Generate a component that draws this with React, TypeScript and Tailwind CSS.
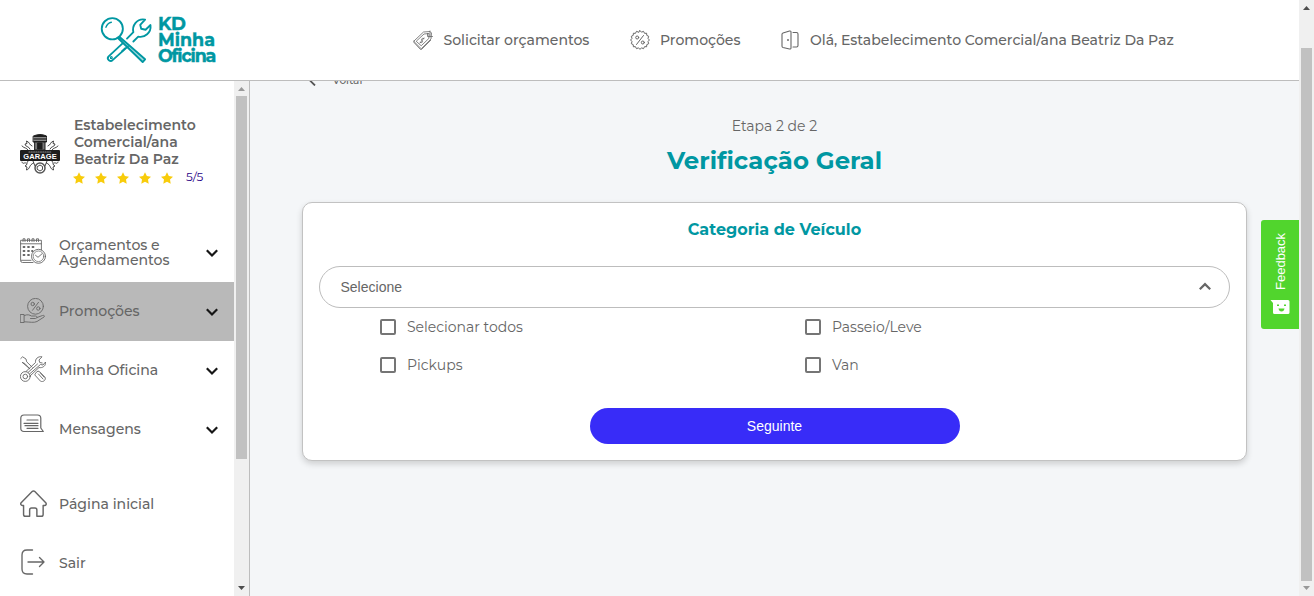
import React from "react";

const line = { fill: "none", stroke: "currentColor", strokeLinecap: "round", strokeLinejoin: "round" } as const;

function Logo() {
  return (
    <div className="ml-[100px] flex w-[116px] items-center gap-[5px] text-[#0097a2]">
      <svg className="mt-px h-[47px] w-[53px] shrink-0" viewBox="0 0 53 48" {...line} strokeWidth="1.9">
        <circle cx="12" cy="12" r="10.8" />
        <path d="M5.500 10.500C6.500 7.500 8.500 6 11 5.400" strokeWidth="1.4" />
        <path d="M19.500 20.500L45.500 43.200L43 46L18.500 22.200Z" fill="#0097a2" fillOpacity=".35" />
        <path d="M27 22l6.500-6.500C32 9 37 1 45.500 2.600L40.500 8l1 4 4.500 1L51 8.200C52 16 45 21.500 38.500 20L33.500 25" />
        <path d="M22.500 27L8 40.500c-2 2.500 2 6 4.300 3.500L28 30" />
        <circle cx="11" cy="41.500" r=".6" />
        <path d="M22 35L25 32" />
      </svg>
      <div className="text-[17.5px] leading-4 font-bold whitespace-nowrap [-webkit-text-stroke:0.4px_#0097a2]">
        <div className="text-[18px] tracking-[-0.2px]">KD</div>
        <div className="tracking-[0px]">Minha</div>
        <div className="tracking-[-1.15px]">Oficina</div>
      </div>
    </div>
  );
}

function TagsIcon() {
  return (
    <svg className="h-5 w-5" viewBox="0 0 20 20" {...line} strokeWidth=".8">
      <path d="M1 11L10.500 2 17 1.500 18.500 3 18 9 8.500 18.500Z" />
      <path d="M3.500 11L11 4l5-.5L15.800 8.500 8.500 15.500Z" />
      <path d="M1 11v1.500l6.500 7 1.200-.2 9-9" />
      <path d="M11 8.500c-2-1-3.200 1-2 2s.500 3-1.800 1.800M7 13l4-5M14.500 3.500v3h5M17 1v6" />
    </svg>
  );
}

function PercentBadgeIcon() {
  return (
    <svg className="h-5 w-5" viewBox="0 0 20 20" {...line} strokeWidth="1">
      <path d="M10 .6L11.500 2.200 13.500 1.300 14.600 3.400 16.600 3.200 16.800 5.400 18.700 6.300 18 8.400 19.400 10 18 11.600 18.700 13.700 16.800 14.600 16.600 16.800 14.600 16.600 13.500 18.700 11.500 17.800 10 19.400 8.500 17.800 6.500 18.700 5.400 16.600 3.400 16.800 3.200 14.600 1.300 13.700 2 11.600.6 10 2 8.400 1.300 6.300 3.200 5.400 3.400 3.200 5.400 3.400 6.500 1.300 8.500 2.200z" />
      <circle cx="7.200" cy="7.500" r="1.500" />
      <circle cx="12.800" cy="12.500" r="1.500" />
      <path d="M13.500 5.500l-7 9" />
    </svg>
  );
}

function DoorIcon() {
  return (
    <svg className="ml-px h-5 w-5" viewBox="0 0 20 20" {...line} strokeWidth="1.100">
      <path d="M2 3L8.500 1c1-.2 1.500.2 1.500 1v16c0 .8-.5 1.200-1.500 1L2 17.500c-.6-.2-1-.5-1-1.200v-12C1 3.600 1.300 3.200 2 3z" />
      <path d="M12 2.500h3.500q1.500 0 1.500 1.500v11.500q0 1.500-1.500 1.500H12" />
      <circle cx="7" cy="10" r=".4" />
    </svg>
  );
}

function GarageLogo() {
  return (
    <div className="relative h-10 w-10 shrink-0 text-[#1e1e1e]">
      <svg className="h-10 w-10" viewBox="0 0 40 40" {...line} strokeWidth="1">
        <path d="M13.500 2q6.500-3 13 0v6h-13z" fill="#1e1e1e" />
        <path d="M14 3.800h12M14 6.200h12" stroke="#fff" strokeWidth=".7" />
        <path d="M15 8h10v8H15z" fill="#777" />
        <path d="M18 9h4v6h-4z" fill="#1e1e1e" />
        <path d="M10 15C9 12 5 13 5 10l2-.5-.5-2.500C10 8 9 11 12 12M2 12c3 3 4 1 6 4M30 15c1-3 5-2 5-5l-2-.5.5-2.500C30 8 31 11 28 12M38 12c-3 3-4 1-6 4" strokeWidth=".8" />
        <path d="M8 27c-2 2 0 4-3 5l2 1-.5 3c4-1 2-5 7-7M32 27c2 2 0 4 3 5l-2 1 .5 3c-4-1-2-5-7-7M2 28c1 3 2 0 4 1M38 28c-1 3-2 0-4 1M13 27l2 5M27 27l-2 5" strokeWidth=".8" />
        <circle cx="20" cy="34" r="5" strokeWidth="1.500" stroke="#555" />
        <path d="M17.500 32.500l2.500-1.500 2.500 1.500v3L20 37l-2.500-1.500z" strokeWidth=".8" />
        <rect x="0" y="16" width="40" height="11" rx="1" fill="#1e1e1e" stroke="none" />
        <path d="M9 18h22" stroke="#888" strokeDasharray="1 1.300" strokeWidth="1.200" />
      </svg>
      <div className="absolute inset-x-0 top-[19px] text-center font-['Liberation_Sans'] text-[7.500px] leading-[7px] font-bold tracking-[.1px] whitespace-nowrap text-white">
        GARAGE
      </div>
    </div>
  );
}

function CalendarIcon() {
  return (
    <svg className="h-[26px] w-[26px]" viewBox="0 0 26 26" {...line} strokeWidth=".9">
      <path d="M13 24.500H2.500Q.6 24.500.6 22.500V2.300h20.800V12M.6 5.800h20.800M1 22.300h10" />
      <path d="M3 3.500V.8h2v2.700M7.500 3.500V.8h2v2.700M12 3.500V.8h2v2.700M16.500 3.500V.8h2v2.700" />
      <path d="M3.500 9h1M8 9h1M12.500 9h1M3.500 13h1M8 13h1M12 13h.5M3.500 17h1M8 17h1" strokeWidth="1.800" />
      <circle cx="18.500" cy="18.300" r="7" />
      <circle cx="18.500" cy="18.300" r="5.300" strokeWidth=".7" />
      <path d="M15.500 17.300l2.500 2 4-3.500" />
    </svg>
  );
}

function HandPercentIcon() {
  return (
    <svg className="mt-[2px] h-[26px] w-[26px]" viewBox="0 0 26 26" {...line} strokeWidth=".9">
      <circle cx="15.500" cy="8.300" r="7.900" />
      <circle cx="12.700" cy="6" r="1.700" />
      <circle cx="18.300" cy="10.500" r="1.700" />
      <path d="M18.500 4.300l-6 8" />
      <path d="M.6 16.500h3.500v8H.6zM4.500 17.500c3-1.500 5-.5 7 .5h4c2 .3 2 2 0 2.500h-5M17 19.500l5.500-2c1.500-.5 2.500.5 1.500 1.500l-7 4.500c-3 1.500-7 .5-12.500.3" />
    </svg>
  );
}

function ToolsIcon() {
  return (
    <svg className="h-[26px] w-[26px]" viewBox="0 0 26 26" {...line} strokeWidth=".9">
      <path d="M.8 2.500L2.600.8 6 3l.7 2.800 5.500 5.400M9.800 12.800L4.800 7.500 2.500 6.500z" />
      <path d="M15.500 17.500l1.500-2 2-.3 6 6c1.500 2.500-2 5.500-4.500 4l-5.500-6zM18.500 18l4.500 5M20.200 16.800l4 4.500" />
      <path d="M9.500 18L20.500 8.500l2.500.5 2.500-3c.5 4-3 6.300-6.500 5.500L10 20M6 15.500L15.500 6.500C15 3 18 0 22 .8L19 4l.7 2.500 2.500.5" />
      <circle cx="5.300" cy="20.500" r="4.900" />
      <circle cx="5.300" cy="20.500" r="2.300" />
      <path d="M8 16.500l9.500-8.500" />
    </svg>
  );
}

function MessageIcon() {
  return (
    <svg className="-mt-[8px] h-[26px] w-[26px]" viewBox="0 0 26 26" {...line} strokeWidth="1.200">
      <path d="M4 4h13.500q3.300 0 3.300 3.300V17l2.500 3.500H4Q.8 20.500.8 17.300V7.300Q.8 4 4 4z" />
      <path d="M7 9h11M4 12.300h14M5 14.700h13M7 17.300h11" />
    </svg>
  );
}

function HomeIcon() {
  return (
    <svg className="mt-[2px] h-[27px] w-[27px]" viewBox="0 0 28 28" {...line} strokeWidth="1.500">
      <path d="M14 1q-.8 0-1.400.6L1.200 13.300c-1 1.200-.2 2.700 1.200 2.700h1.300v9.300q0 1.900 1.900 1.900H10v-6.500q0-2 2-2h3.500q2 0 2 2v6.500h4.600q1.900 0 1.900-1.900V16h1.500c1.400 0 2.300-1.400 1.200-2.700L15.400 1.600Q14.800 1 14 1z" />
    </svg>
  );
}

function ExitIcon() {
  return (
    <svg className="h-[26px] w-[26px]" viewBox="0 0 26 26" {...line} strokeWidth="1.350">
      <path d="M12.500 1H7Q2 1 2 6v14q0 5 5 5h5.500M8 13h16M19.500 8.500L24 13l-4.500 4.500" />
    </svg>
  );
}

function Chevron({ up = false }: { up?: boolean }) {
  return (
    <svg className="h-3 w-3" viewBox="0 0 12 12" fill="none" stroke="currentColor" strokeWidth="2.200">
      <path d={up ? "M.8 8.300L6 3.100l5.200 5.200" : "M.8 3.300L6 8.500l5.200-5.200"} />
    </svg>
  );
}

function MenuItem({
  icon,
  children,
  active = false,
  arrow = true,
}: {
  icon: React.ReactNode;
  children: React.ReactNode;
  active?: boolean;
  arrow?: boolean;
}) {
  return (
    <div className={`flex h-[59px] items-center pr-4 pl-5 ${active ? "bg-[#b9b9b9]" : ""}`}>
      <div className="flex w-[39px] shrink-0 items-center pb-1">{icon}</div>
      <div className="flex-1 text-[14.050px] leading-[15px] font-medium whitespace-nowrap">{children}</div>
      {arrow && (
        <div className="text-[#161616]">
          <Chevron />
        </div>
      )}
    </div>
  );
}

function Check({ children }: { children: React.ReactNode }) {
  return (
    <div className="flex h-[38px] items-center gap-[11px]">
      <span className="h-4 w-4 rounded-[2px] border-2 border-[#757575]" />
      <span className="text-[14px]">{children}</span>
    </div>
  );
}

function Arrow({ up = false, muted = false }: { up?: boolean; muted?: boolean }) {
  return (
    <svg className="h-[15px] w-[15px] shrink-0" viewBox="0 0 15 15" fill={muted ? "#999" : "#4d4d4d"}>
      <path d={up ? "M7.500 6L11 10H4z" : "M7.500 9L11 5H4z"} />
    </svg>
  );
}

export default function App() {
  return (
    <div className="flex h-[596px] w-[1314px] overflow-hidden bg-[#f4f6f8] font-['Montserrat','Inter',sans-serif] text-[#666]">
      <div className="flex w-[1299px] flex-col">
        <header className="flex h-[81px] shrink-0 items-center border-b border-[#bdbdbd] bg-white">
          <Logo />
          <nav className="ml-[197px] flex items-center text-[14.030px] leading-5 font-medium whitespace-nowrap">
            <div className="flex w-[217px] items-center gap-[10.500px]">
              <TagsIcon />
              <span>Solicitar orçamentos</span>
            </div>
            <div className="flex w-[150px] items-center gap-[10px]">
              <PercentBadgeIcon />
              <span>Promoções</span>
            </div>
            <div className="flex items-center gap-[9px]">
              <DoorIcon />
              <span>Olá, Estabelecimento Comercial/ana Beatriz Da Paz</span>
            </div>
          </nav>
        </header>
        <div className="flex min-h-0 flex-1">
          <aside className="flex w-[250px] shrink-0 border-r border-[#bdbdbd] bg-white">
            <div className="w-[234px]">
              <div className="flex h-[142px] pt-9 pl-5">
                <div className="pt-[17px]">
                  <GarageLogo />
                </div>
                <div className="ml-[14px]">
                  <div className="text-[14.030px] leading-[17px] font-semibold whitespace-nowrap">
                    <div>Estabelecimento</div>
                    <div>Comercial/ana</div>
                    <div>Beatriz Da Paz</div>
                  </div>
                  <div className="-ml-px flex h-[18px] items-center text-[#f8cc0b]">
                    {[0, 1, 2, 3, 4].map((i) => (
                      <svg key={i} className="mt-px mr-[10px] h-3 w-3" viewBox="0 0 24 23" fill="currentColor">
                        <path d="M12 0l3.700 7.600 8.300 1.200-6 5.900 1.400 8.300-7.400-3.900L4.600 23 6 14.700 0 8.800l8.300-1.200z" />
                      </svg>
                    ))}
                    <span className="ml-[3px] pb-px text-[12px] leading-[14px] tracking-[-0.1px] text-[#260084]">5/5</span>
                  </div>
                </div>
              </div>
              <MenuItem icon={<CalendarIcon />}>
                Orçamentos e<br />
                Agendamentos
              </MenuItem>
              <MenuItem icon={<HandPercentIcon />} active>
                Promoções
              </MenuItem>
              <MenuItem icon={<ToolsIcon />}>Minha Oficina</MenuItem>
              <MenuItem icon={<MessageIcon />}>Mensagens</MenuItem>
              <div className="h-4" />
              <MenuItem icon={<HomeIcon />} arrow={false}>
                Página inicial
              </MenuItem>
              <MenuItem icon={<ExitIcon />} arrow={false}>
                Sair
              </MenuItem>
            </div>
            <div className="flex w-[15px] flex-col bg-[#f0f0f0]">
              <Arrow up muted />
              <div className="mx-auto h-[363px] w-[11px] bg-[#c1c1c1]" />
              <div className="flex-1" />
              <Arrow />
            </div>
          </aside>
          <main className="relative min-w-0 flex-1 overflow-hidden">
            <div className="-mt-[10px] flex h-[17px] items-center gap-[15.500px] pl-[58px] text-[10.5px] font-medium">
              <svg className="h-3 w-[9px]" viewBox="0 0 9 12" fill="none" stroke="#555" strokeWidth="1.800">
                <path d="M7 .5L1.500 6 7 11.500" />
              </svg>
              <span className="pt-[2px]">Voltar</span>
            </div>
            <div className="mt-[28px] text-center text-[14px] leading-5">Etapa 2 de 2</div>
            <h1 className="mt-[6px] text-center text-[24.4px] leading-[36px] font-bold text-[#0097a2]">Verificação Geral</h1>
            <section className="mt-[24px] ml-[52px] h-[259px] w-[945px] rounded-[10px] border border-[#c2c2c2] bg-white px-4 pt-[17px] shadow-[0_3px_6px_rgba(0,0,0,0.16)]">
              <h2 className="text-center text-[16px] leading-5 font-bold text-[#0097a2]">Categoria de Veículo</h2>
              <div className="mt-[26px] flex h-[42px] items-center justify-between rounded-full border border-[#bdbdbd] pr-[18px] pl-[20.5px] font-['Liberation_Sans'] text-[14px]">
                <span>Selecione</span>
                <Chevron up />
              </div>
              <div className="grid grid-cols-[425px_1fr] pl-[61px]">
                <Check>Selecionar todos</Check>
                <Check>Passeio/Leve</Check>
                <Check>Pickups</Check>
                <Check>Van</Check>
              </div>
              <button className="mx-auto mt-6 block h-9 w-[370px] rounded-full bg-[#382cf8] font-['Liberation_Sans'] text-[14px] text-white">
                Seguinte
              </button>
            </section>
            <div className="absolute top-[139px] right-0 flex h-[109px] w-[38px] flex-col items-center rounded-l-[3px] bg-[#51d52d] text-white">
              <span className="mt-[12px] ml-px h-[59px] rotate-180 text-center font-['Liberation_Sans'] text-[13px] leading-[18px] [writing-mode:vertical-rl]">
                Feedback
              </span>
              <svg className="mt-[9px] h-[15px] w-[20px]" viewBox="0 0 20 15">
                <path d="M.5 0H18q1.500 0 1.500 1.500v11Q19.500 14 18 14H4.500Q3 14 3 12.500V3z" fill="white" />
                <path d="M7 4.500h2v1.600H7zM14 4.500h2v1.600h-2zM8.500 8.500h6q-.5 3-3 3t-3-3z" fill="#51d52d" />
              </svg>
            </div>
          </main>
        </div>
      </div>
      <div className="flex w-[15px] flex-col bg-[#f0f0f0]">
        <Arrow up />
        <div className="mx-auto mt-[33px] h-[533px] w-[11px] bg-[#c1c1c1]" />
        <Arrow muted />
      </div>
    </div>
  );
}
